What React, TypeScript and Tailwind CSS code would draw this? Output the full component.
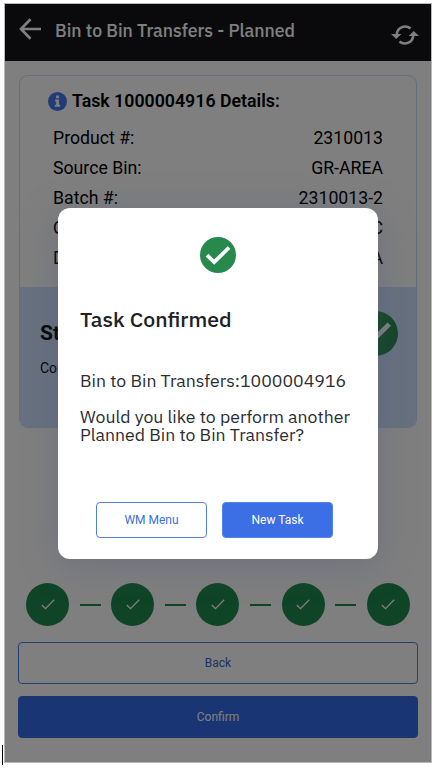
import { Fragment } from "react";

const details = [
  ["Product #:", "2310013"],
  ["Source Bin:", "GR-AREA"],
  ["Batch #:", "2310013-2"],
  ["Quantity:", "1 PC"],
  ["Dest. Bin:", "GR-AREA"],
];

function CheckCircle({ className }: { className: string }) {
  return (
    <svg viewBox="0 0 36 36" className={className}>
      <circle cx="18" cy="18" r="18" fill="#278a4c" />
      <path d="M7 18.2 L14.2 25.2 L29 10.5" fill="none" stroke="#fff" strokeWidth="3.8" />
    </svg>
  );
}

function Header() {
  return (
    <header className="flex h-[57px] shrink-0 items-center bg-[#141419] text-white">
      <svg viewBox="0 0 22 22" className="-mt-[7px] ml-[14px] h-[22px] w-[22px]" fill="none" stroke="currentColor" strokeWidth="2.7">
        <path d="M11.5 1.3 L2 11 L11.5 20.7 M2 11 H22" />
      </svg>
      <h1 className="-mt-[3px] ml-[14px] whitespace-nowrap font-['IBM_Plex_Sans',Roboto,sans-serif] text-[17.7px] font-medium">
        Bin to Bin Transfers - Planned
      </h1>
      <svg viewBox="0 0 28 20" className="mt-[4px] mr-[12px] ml-auto h-5 w-7">
        <path d="M5.8 10 A8.3 8.3 0 0 1 19.5 3.6" fill="none" stroke="currentColor" strokeWidth="2.6" />
        <path d="M22.2 10 A8.3 8.3 0 0 1 8.5 16.4" fill="none" stroke="currentColor" strokeWidth="2.6" />
        <path d="M0 9 H10.4 L5.2 14 Z M17.6 11 H28 L22.8 6 Z" fill="currentColor" />
      </svg>
    </header>
  );
}

function TaskCard() {
  return (
    <section className="mx-[14px] mt-[14px] h-[353px] overflow-hidden rounded-[9px] border border-[#cfdcfa]">
      <div className="h-[211px] pt-[14px]">
        <div className="flex h-[22px] items-center pl-[28px]">
          <svg viewBox="0 0 20 20" className="h-[19px] w-[19px]">
            <circle cx="10" cy="10" r="10" fill="#4478ee" />
            <path d="M8.5 3.8h3v2.8h-3z M7.5 8h4v5.5h1.3v2H7.2v-2h1.4V10H7.5z" fill="#fff" />
          </svg>
          <h2 className="ml-[5px] whitespace-nowrap text-[17.75px] font-semibold">Task 1000004916 Details:</h2>
        </div>
        <dl className="mt-[11.7px] pr-[33px] pl-[33px] text-[17.7px]">
          {details.map(([label, value]) => (
            <div key={label} className="flex h-[29.8px] items-center justify-between">
              <dt>{label}</dt>
              <dd>{value}</dd>
            </div>
          ))}
        </dl>
      </div>
      <div className="flex h-[141px] justify-between bg-[#cfe2ff] pr-[18px] pl-5">
        <div>
          <h2 className="mt-[33px] text-[21px] leading-[27px] font-bold">Status</h2>
          <p className="mt-[11px] text-[14px] leading-5">Confirmed</p>
        </div>
        <CheckCircle className="mt-6 h-[45px] w-[45px]" />
      </div>
    </section>
  );
}

function Steps() {
  return (
    <div className="mt-[155px] ml-[21px] flex h-[43px] items-center">
      {[0, 1, 2, 3, 4].map((n) => (
        <Fragment key={n}>
          {n > 0 && <span className="mx-[10.6px] h-0.5 w-[21px] bg-[#1f8a4c]" />}
          <span className="flex h-[43px] w-[43px] items-center justify-center rounded-full bg-[#1f8a4c]">
            <svg viewBox="0 0 14 11" className="h-[11px] w-[14px]" fill="none" stroke="#fff" strokeWidth="1.3">
              <path d="M0.8 6 L4.5 9.6 L13.2 0.8" />
            </svg>
          </span>
        </Fragment>
      ))}
    </div>
  );
}

function ConfirmDialog() {
  return (
    <div role="dialog" className="mt-[203.5px] h-[351.5px] w-80 rounded-[12px] bg-white px-[22px] text-[#202124] shadow-[0_6px_36px_rgba(80,90,120,0.35)]">
      <CheckCircle className="mx-auto mt-[29.5px] h-9 w-9" />
      <div className="font-['IBM_Plex_Sans',Roboto,sans-serif]">
        <h2 className="mt-[32px] text-[21.3px] leading-7 font-medium">Task Confirmed</h2>
        <p className="mt-[37px] text-[17.7px] leading-[22px] whitespace-nowrap text-[#2c2d31]">Bin to Bin Transfers:1000004916</p>
        <p className="mt-[16px] text-[17.7px] leading-[18px] whitespace-nowrap text-[#2c2d31]">
          Would you like to perform another
          <br />
          Planned Bin to Bin Transfer?
        </p>
      </div>
      <div className="mt-[58px] flex justify-center gap-[15px] pr-[7px] text-[12px]">
        <button className="h-9 w-[111px] shrink-0 rounded-[4px] border border-[#4f80dc] text-[#3d6fd6]">WM Menu</button>
        <button className="h-9 w-[111px] shrink-0 rounded-[4px] border border-[#5184ef] bg-[#3c6ee6] text-white">New Task</button>
      </div>
    </div>
  );
}

export default function App() {
  return (
    <div className="flex h-[768px] w-[436px] overflow-hidden bg-white pt-[3px] font-[Roboto,sans-serif] text-black">
      <div className="mt-[742px] ml-[2px] h-5 w-px shrink-0 bg-black" />
      <main className="relative ml-px flex h-[760px] w-[428px] shrink-0 flex-col border border-[#b8b8b8] bg-white">
        <Header />
        <TaskCard />
        <Steps />
        <div className="mx-[13px] mt-4 flex flex-col gap-3 text-[12px]">
          <button className="h-[42px] rounded-[4px] border border-[#4f80dc] text-[#3565cf]">Back</button>
          <button className="h-[42px] rounded-[4px] border border-[#3a6ad0] bg-[#346be6] text-white">Confirm</button>
        </div>
        <div className="absolute inset-0 flex items-start justify-center bg-black/50">
          <ConfirmDialog />
        </div>
      </main>
    </div>
  );
}
